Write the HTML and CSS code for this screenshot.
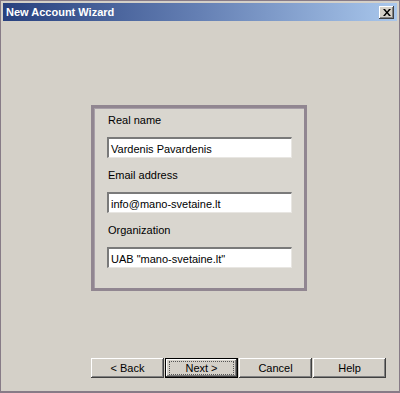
FILE: index.html
```html
<!DOCTYPE html>
<html>
<head>
<meta charset="utf-8">
<link rel="stylesheet" href="styles.css">
</head>
<body>
<div class="window">
  <div class="titlebar">
    <span class="title">New Account Wizard</span>
    <span class="close">
      <svg width="8" height="7" viewBox="0 0 8 7"><path d="M0 0h2l2 2.5L6 0h2L5 3.5 8 7H6L4 4.5 2 7H0l3-3.5z" fill="#000"/></svg>
    </span>
  </div>
  <div class="content">
    <div class="panel">
      <div class="field">
        <label class="label">Real name</label>
        <div class="input">Vardenis Pavardenis</div>
      </div>
      <div class="field">
        <label class="label">Email address</label>
        <div class="input">info@mano-svetaine.lt</div>
      </div>
      <div class="field">
        <label class="label">Organization</label>
        <div class="input">UAB "mano-svetaine.lt"</div>
      </div>
    </div>
    <div class="buttons">
      <div class="btn">&lt; Back</div>
      <div class="btn default"><span class="focus">Next &gt;</span></div>
      <div class="btn">Cancel</div>
      <div class="btn">Help</div>
    </div>
  </div>
</div>
</body>
</html>
```

FILE: styles.css
```css
* { box-sizing: border-box; }
html, body { margin: 0; padding: 0; }
body {
  width: 400px;
  height: 393px;
  font-family: "Liberation Sans", Arial, sans-serif;
  font-size: 11px;
  color: #000;
  background: #d4d0c8;
}
.window {
  width: 400px;
  height: 393px;
  border: 1px solid #877b87;
  border-bottom-width: 2px;
  padding: 2px;
  background: #d4d0c8;
  display: flex;
  flex-direction: column;
}
.titlebar {
  height: 18px;
  flex: none;
  background: linear-gradient(to right, #27407e 0%, #6580b4 50%, #a9c7ec 100%);
  display: flex;
  align-items: center;
  justify-content: space-between;
  padding: 0 3px 0 3px;
}
.title {
  color: #fff;
  font-weight: bold;
  font-size: 11px;
}
.close {
  width: 15px;
  height: 13px;
  background: #d4d0c8;
  box-shadow: inset -1px -1px 0 #404040, inset 1px 1px 0 #fff, inset -2px -2px 0 #808080;
  display: flex;
  align-items: center;
  justify-content: center;
}
.content {
  flex: 1;
  display: flex;
  flex-direction: column;
  align-items: center;
  padding: 84px 11px 11px 88px;
}
.panel {
  width: 216px;
  height: 186px;
  border: 3px solid #918691;
  box-shadow: inset 1px 1px 0 #a89fa8;
  background: #d9d6cf;
  padding: 6px 12px 0 13px;
  display: flex;
  flex-direction: column;
  gap: 11px;
  align-self: flex-start;
}
.field {
  display: flex;
  flex-direction: column;
  gap: 10px;
}
.label {
  display: block;
  line-height: 13px;
  padding-left: 1px;
}
.input {
  width: 185px;
  height: 21px;
  background: #fff;
  border-top: 2px solid #7a7a7a;
  border-left: 2px solid #7a7a7a;
  border-right: 1px solid #e8e6e2;
  border-bottom: 1px solid #e8e6e2;
  padding: 3px 2px 0 2px;
  line-height: 14px;
}
.buttons {
  margin-top: auto;
  align-self: flex-end;
  display: flex;
  gap: 1px;
}
.btn {
  width: 73px;
  height: 20px;
  background: #d4d0c8;
  box-shadow: inset -1px -1px 0 #404040, inset 1px 1px 0 #fff, inset -2px -2px 0 #808080;
  display: flex;
  align-items: center;
  justify-content: center;
  line-height: 13px;
}
.btn.default {
  border: 1px solid #000;
}
.focus {
  display: flex;
  align-items: center;
  justify-content: center;
  width: 63px;
  height: 12px;
  outline: 1px dotted #555;
}
```
